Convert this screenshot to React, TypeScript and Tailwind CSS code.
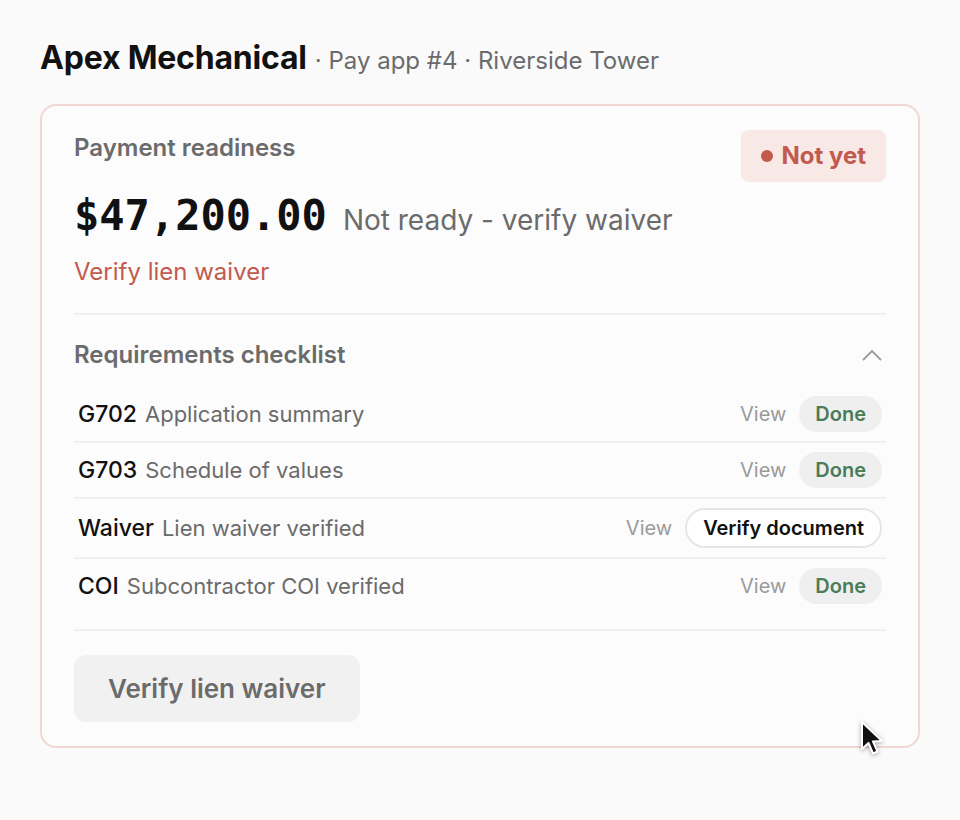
const items = [
  { code: "G702", label: "Application summary", done: true },
  { code: "G703", label: "Schedule of values", done: true },
  { code: "Waiver", label: "Lien waiver verified", done: false },
  { code: "COI", label: "Subcontractor COI verified", done: true },
];

function Pointer() {
  return (
    <svg width="30" height="40" viewBox="0 0 30 40" className="absolute left-[858px] top-[719px] drop-shadow-[0_1px_2px_rgba(0,0,0,0.35)]">
      <path d="M4 3 L4 30 L10.5 24 L15 34.5 L19.5 32.5 L15 22.5 L24 22 Z" fill="#111" stroke="#fff" strokeWidth="2" strokeLinejoin="round" />
    </svg>
  );
}

export default function App() {
  return (
    <div className="relative min-h-[820px] bg-[#fafafa] px-10 pt-[38px] font-['Inter',sans-serif] text-[#111]">
      <div className="flex items-baseline gap-2">
        <h1 className="text-[32px] leading-10 font-bold tracking-[-0.2px]">Apex Mechanical</h1>
        <span className="text-[24px] text-[#6b6b6b]">· Pay app #4 · Riverside Tower</span>
      </div>

      <div className="mt-[25px] w-[880px] rounded-2xl border-2 border-[#f1d6d1] bg-[#fcfcfc] px-8 pt-6 pb-6">
        {/* readiness header */}
        <div className="flex items-start justify-between">
          <div className="pt-[2px] text-[24px] leading-8 font-semibold text-[#6b6b6b]">Payment readiness</div>
          <div className="flex h-[52px] items-center gap-2 rounded-lg bg-[#f8e8e6] px-5 text-[24px] font-bold text-[#c25a4e]">
            <span className="h-3 w-3 rounded-full bg-[#c25a4e]" />
            Not yet
          </div>
        </div>
        <div className="mt-3 flex items-baseline gap-4">
          <span className="font-['DejaVu_Sans_Mono',monospace] text-[42px] font-bold leading-[44px]">$47,200.00</span>
          <span className="text-[28px] leading-none text-[#6b6b6b]">Not ready - verify waiver</span>
        </div>
        <div className="mt-[18px] text-[24px] leading-8 text-[#c25a4e]">Verify lien waiver</div>

        <div className="mt-[25px] border-t-2 border-[#f0f0f0] pt-6">
          <div className="flex items-center justify-between">
            <span className="text-[24px] leading-8 font-semibold text-[#6b6b6b]">Requirements checklist</span>
            <svg width="22" height="14" viewBox="0 0 22 14" className="mr-[3px]">
              <path d="M2 12 L11 3 L20 12" fill="none" stroke="#9a9a9a" strokeWidth="1.8" />
            </svg>
          </div>
          <div className="mt-4">
            {items.map((it, i) => (
              <div
                key={it.code}
                className={`flex items-center justify-between py-[9px] pl-1 ${i < items.length - 1 ? "border-b-2 border-[#f0f0f0]" : ""}`}
              >
                <div className="flex items-baseline gap-2">
                  <span className="text-[23px] font-medium">{it.code}</span>
                  <span className="text-[22px] text-[#6b6b6b]">{it.label}</span>
                </div>
                <div className="mr-1 flex items-center gap-[13px]">
                  <span className="text-[20px] text-[#9a9a9a]">View</span>
                  {it.done ? (
                    <span className="flex h-[36px] items-center rounded-full bg-[#efefef] px-4 text-[20px] font-semibold text-[#4a7c59]">Done</span>
                  ) : (
                    <span className="flex h-[40px] items-center rounded-full border-2 border-[#e6e6e6] bg-white px-4 text-[20px] font-semibold text-[#111]">Verify document</span>
                  )}
                </div>
              </div>
            ))}
          </div>
        </div>

        <div className="mt-4 border-t-2 border-[#f0f0f0] pt-6">
          <button className="h-[67px] rounded-xl bg-[#f1f1f1] px-[34px] text-[26px] font-semibold text-[#6b6b6b]">Verify lien waiver</button>
        </div>
      </div>
      <Pointer />
    </div>
  );
}
